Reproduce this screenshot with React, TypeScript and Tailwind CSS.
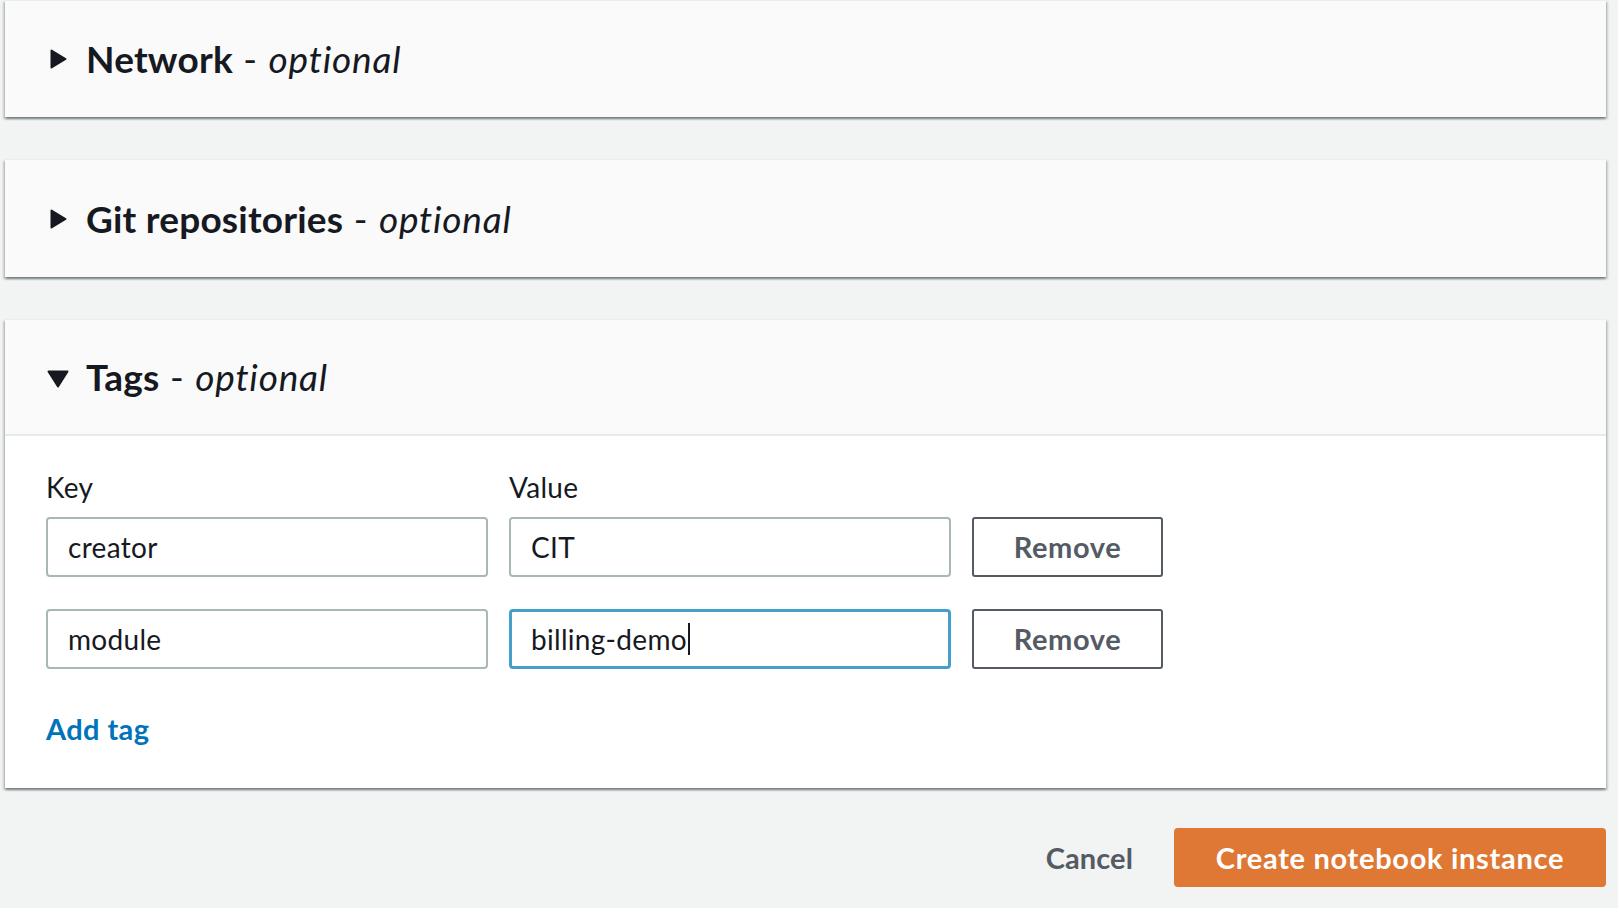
import React from "react";

const font = { fontFamily: "Lato, 'Open Sans', sans-serif" };

function TriRight() {
  return (
    <svg width="17" height="20" viewBox="0 0 17 20" className="shrink-0">
      <path d="M1.5 1.5 L15.5 10 L1.5 18.5 Z" fill="#16191f" stroke="#16191f" strokeWidth="2" strokeLinejoin="round" />
    </svg>
  );
}

function TriDown() {
  return (
    <svg width="22" height="18" viewBox="0 0 22 18" className="shrink-0">
      <path d="M1.5 1.5 L20.5 1.5 L11 16.5 Z" fill="#16191f" stroke="#16191f" strokeWidth="2" strokeLinejoin="round" />
    </svg>
  );
}

const cardCls =
  "bg-white border-t border-[#eaeded] shadow-[0_2px_2px_0_rgba(0,28,36,0.35),2px_2px_2px_0_rgba(0,28,36,0.15),-2px_2px_2px_0_rgba(0,28,36,0.15)]";

function Title({ name }: { name: string }) {
  return (
    <div className="text-[37px] leading-[44px] text-[#16191f] whitespace-nowrap">
      <span className="font-bold tracking-[0.2px]">{name}</span>
      <span className="tracking-[1px]"> - </span>
      <span className="italic tracking-[0.8px]">optional</span>
    </div>
  );
}

function CollapsedCard({ name, h }: { name: string; h: string }) {
  return (
    <div className={cardCls}>
      <div className={`${h} bg-[#fafafa] flex items-center pl-[45px] gap-[19px]`}>
        <TriRight />
        <Title name={name} />
      </div>
    </div>
  );
}

function Field({ text, focus, caret }: { text: string; focus?: boolean; caret?: boolean }) {
  return (
    <div
      className={
        focus
          ? "w-[442px] h-[60px] rounded-[4px] border-[3px] border-[#44a0c8] bg-white flex items-center pl-[19px] text-[28px] tracking-[0.3px] text-[#16191f]"
          : "w-[442px] h-[60px] rounded-[4px] border-2 border-[#aab7b8] bg-white flex items-center pl-[20px] text-[28px] tracking-[0.3px] text-[#16191f]"
      }
    >
      <span>{text}</span>
      {caret && <span className="inline-block w-[2px] h-[32px] bg-[#16191f] ml-[1px]" />}
    </div>
  );
}

function RemoveBtn() {
  return (
    <div className="w-[191px] h-[60px] rounded-[3px] border-2 border-[#545b64] bg-white flex items-center justify-center text-[29px] tracking-[0.6px] font-bold text-[#545b64]">
      Remove
    </div>
  );
}

export default function App() {
  return (
    <div style={font} className="w-[1618px] h-[908px] bg-[#f2f3f3] overflow-hidden pl-[5px] pr-[12px]">
      <div className="flex flex-col gap-[42px]">
        <CollapsedCard name="Network" h="h-[116px]" />
        <CollapsedCard name="Git repositories" h="h-[117px]" />
        <div className={cardCls}>
          <div className="h-[116px] bg-[#fafafa] flex items-center pl-[42px] gap-[17px] border-b-2 border-[#e6eaea]">
            <div className="pt-[3px]">
              <TriDown />
            </div>
            <Title name="Tags" />
          </div>
          <div className="pl-[41px] pt-[33px] pb-[41px]">
            <div className="flex gap-[21px] text-[28px] leading-[36px] tracking-[0.3px] text-[#16191f]">
              <div className="w-[442px]">Key</div>
              <div className="w-[442px]">Value</div>
            </div>
            <div className="mt-[12px] flex flex-col gap-[32px]">
              <div className="flex gap-[21px]">
                <Field text="creator" />
                <Field text="CIT" />
                <RemoveBtn />
              </div>
              <div className="flex gap-[21px]">
                <Field text="module" />
                <Field text="billing-demo" focus caret />
                <RemoveBtn />
              </div>
            </div>
            <div className="mt-[42px] text-[29px] leading-[36px] tracking-[0.4px] font-bold text-[#0073bb]">Add tag</div>
          </div>
        </div>
      </div>
      <div className="flex justify-end items-center gap-[41px] mt-[40px]">
        <div className="text-[29px] tracking-[0.1px] font-bold text-[#545b64]">Cancel</div>
        <div className="w-[432px] h-[59px] rounded-[4px] bg-[#df7834] flex items-center justify-center text-[29px] tracking-[0.7px] font-bold text-white">
          Create notebook instance
        </div>
      </div>
    </div>
  );
}
